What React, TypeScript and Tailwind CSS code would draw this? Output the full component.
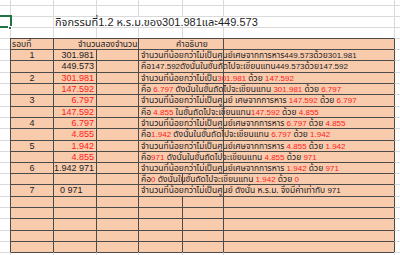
type Seg = { t: string; red?: boolean };

const s = (t: string, red = false): Seg => ({ t, red });

type DataRow = {
  h: 11 | 12;
  b?: string;
  c?: string;
  cRed?: boolean;
  cLeft?: boolean;
  e: Seg[];
  split?: boolean;
};

const dataRows: DataRow[] = [
  { h: 11, b: "1", c: "301.981", e: [s("จำนวนที่น้อยกว่าไม่เป็นศูนย์เศษจากการหาร449.573ด้วย301.981")] },
  { h: 12, c: "449.573", e: [s("คือ147.592ดังนั้นในขั้นถัดไปจะเขียนแทน449.573ด้วย147.592")] },
  {
    h: 11,
    b: "2",
    c: "301.981",
    cRed: true,
    e: [s("จำนวนที่น้อยกว่าไม่เป็น"), s("301.981", true), s(" ด้วย "), s("147.592", true)],
  },
  {
    h: 11,
    c: "147.592",
    cRed: true,
    e: [s("คือ "), s("6.797", true), s(" ดังนั้นในขั้นถัดไปจะเขียนแทน "), s("301.981", true), s(" ด้วย "), s("6.797", true)],
  },
  {
    h: 12,
    b: "3",
    c: "6.797",
    cRed: true,
    e: [s("จำนวนที่น้อยกว่าไม่เป็นศูนย์ เศษจากการหาร "), s("147.592", true), s(" ด้วย "), s("6.797", true)],
  },
  {
    h: 11,
    c: "147.592",
    cRed: true,
    e: [s("คือ "), s("4.855", true), s(" ในขั้นถัดไปจะเขียนแทน"), s("147.592", true), s(" ด้วย "), s("4.855", true)],
  },
  {
    h: 11,
    b: "4",
    c: "6.797",
    cRed: true,
    e: [s("จำนวนที่น้อยกว่าไม่เป็นศูนย์เศษจากการหาร "), s("6.797", true), s(" ด้วย "), s("4.855", true)],
  },
  {
    h: 12,
    c: "4.855",
    cRed: true,
    e: [s("คือ"), s("1.942", true), s(" ดังนั้นในขั้นถัดไปจะเขียนแทน "), s("6.797", true), s(" ด้วย "), s("1.942", true)],
  },
  {
    h: 11,
    b: "5",
    c: "1.942",
    cRed: true,
    e: [s("จำนวนที่น้อยกว่าไม่เป็นศูนย์เศษจากการหาร "), s("4.855", true), s(" ด้วย "), s("1.942", true)],
  },
  {
    h: 11,
    c: "4.855",
    cRed: true,
    e: [s("คือ"), s("971", true), s(" ดังนั้นในขั้นถัดไปจะเขียนแทน "), s("4.855", true), s(" ด้วย "), s("971", true)],
  },
  {
    h: 11,
    b: "6",
    c: "1.942 971",
    e: [s("จำนวนที่น้อยกว่าไม่เป็นศูนย์เศษจากการหาร "), s("1.942", true), s(" ด้วย "), s("971", true)],
  },
  {
    h: 11,
    split: true,
    e: [s("คือ"), s("0", true), s(" ดังนั้นในขั้นถัดไปจะเขียนแทน "), s("1.942", true), s(" ด้วย "), s("0", true)],
  },
  {
    h: 12,
    b: "7",
    c: "0 971",
    cLeft: true,
    e: [s("จำนวนที่น้อยกว่าไม่เป็นศูนย์ ดังนั้น ห.ร.ม. จึงมีค่าเท่ากับ 971")],
  },
];

const emptyHeights: (11 | 12)[] = [11, 11, 12, 11, 11];

const thaiSm = "font-['Noto_Sans_Thai',sans-serif] text-[8.5px]";
const digitSm = "font-['Liberation_Sans',sans-serif] text-[8px]";
const thaiLg = "font-['Noto_Sans_Thai',sans-serif] text-[11px]";
const digitLg = "font-['Liberation_Sans',sans-serif] text-[11px]";

// Thai runs in a Thai face, numbers in Liberation Sans
function Mixed({ text, big = false }: { text: string; big?: boolean }) {
  const parts = text.split(/(\d[\d.]*)/);
  return (
    <>
      {parts.map((p, i) =>
        p === "" ? null : (
          <span key={i} className={/^\d/.test(p) ? (big ? digitLg : digitSm) : big ? thaiLg : thaiSm}>
            {p}
          </span>
        ),
      )}
    </>
  );
}

function Segs({ segs }: { segs: Seg[] }) {
  return (
    <>
      {segs.map((g, i) => (
        <span key={i} className={g.red ? "text-[#ff1a1a]" : "text-[#1e1e1e]"}>
          <Mixed text={g.t} />
        </span>
      ))}
    </>
  );
}

// light gridline columns outside the table
function LightCols({ top = true }: { top?: boolean }) {
  const t = top ? "border-t" : "";
  return (
    <>
      <div className={`w-[43px] border-l ${t} border-[#dadada]`} />
      <div className={`w-[43px] border-l ${t} border-[#dadada]`} />
      <div className={`w-[42px] border-l ${t} border-[#dadada]`} />
      <div className={`w-[44px] border-l ${t} border-[#dadada]`} />
      <div className={`w-[41px] border-l ${t} border-[#dadada]`} />
      <div className={`w-[171px] border-l ${t} border-[#dadada]`} />
    </>
  );
}

function TableRow({ h, children }: { h: 11 | 12; children: React.ReactNode }) {
  return (
    <div className={`flex ${h === 12 ? "h-[12px]" : "h-[11px]"}`}>
      <div className="w-[10px] border-t border-[#dadada]" />
      <div className="flex w-[384px] bg-[#f8cbad]">{children}</div>
      <div className="w-[6px] border-l border-t border-l-[#4b4b4b] border-t-[#dadada]" />
    </div>
  );
}

const cell = "border-l border-t border-[#4b4b4b] whitespace-nowrap leading-[10px]";

export default function App() {
  return (
    <div className="w-[400px] h-[255px] overflow-hidden bg-white text-[9px] font-['Liberation_Sans',sans-serif]">
      {/* rows above the table */}
      <div className="flex h-[5px]">
        <div className="w-[10px]" />
        <LightCols top={false} />
        <div className="w-[6px] border-l border-[#dadada]" />
      </div>
      <div className="flex h-[11px]">
        <div className="w-[10px] border-t border-[#dadada]" />
        <LightCols />
        <div className="w-[6px] border-l border-t border-[#dadada]" />
      </div>
      <div className="flex h-[11px]">
        <div className="relative w-[10px] border-t border-[#dadada]">
          <div className="absolute left-0 top-[-2px] h-[13px] w-[12px] border-2 border-l-0 border-[#217346]" />
          <div className="absolute left-[8px] top-[9px] h-[4px] w-[4px] border border-white bg-[#217346]" />
        </div>
        <div className="w-[43px] border-l border-t border-[#dadada]" />
        <div className="w-[341px] border-l border-t border-[#dadada] pl-[1px] whitespace-nowrap leading-[10px] text-[#1e1e1e]">
          <Mixed big text="กิจกรรมที่1.2 ห.ร.ม.ของ301.981และ449.573" />
        </div>
        <div className="w-[6px] border-l border-t border-[#dadada]" />
      </div>
      <div className="flex h-[11px]">
        <div className="w-[10px] border-t border-[#dadada]" />
        <LightCols />
        <div className="w-[6px] border-l border-t border-[#dadada]" />
      </div>

      {/* header */}
      <TableRow h={11}>
        <div className={`${cell} w-[43px] pl-[1px] text-[#1e1e1e]`}>
          <Mixed text="รอบที่" />
        </div>
        <div className={`${cell} w-[85px] overflow-hidden pl-[24px] text-[#1e1e1e]`}>
          <Mixed text="จำนวนสองจำนวน" />
        </div>
        <div className={`${cell} w-[85px] pl-[37px] text-[#1e1e1e]`}>
          <Mixed text="คำอธิบาย" />
        </div>
        <div className={`${cell} w-[171px]`} />
      </TableRow>

      {dataRows.map((r, i) => (
        <TableRow key={i} h={r.h}>
          <div className={`${cell} w-[43px] text-center text-[#1e1e1e]`}>{r.b}</div>
          <div
            className={`${cell} w-[43px] ${r.cLeft ? "pl-[6px] text-left" : "pr-[2px] text-right"} ${
              r.cRed ? "text-[#ff1a1a]" : "text-[#1e1e1e]"
            }`}
          >
            {r.c}
          </div>
          <div className={`${cell} w-[42px]`} />
          {r.split ? (
            <>
              <div className={`${cell} w-[44px] pl-[2px]`}>
                <Segs segs={r.e} />
              </div>
              <div className={`${cell} w-[212px]`} />
            </>
          ) : (
            <>
              <div className={`${cell} w-[85px] pl-[2px]`}>
                <Segs segs={r.e} />
              </div>
              <div className={`${cell} w-[171px]`} />
            </>
          )}
        </TableRow>
      ))}

      {emptyHeights.map((h, i) => (
        <TableRow key={`e${i}`} h={h}>
          <div className={`${cell} w-[43px]`} />
          <div className={`${cell} w-[43px]`} />
          <div className={`${cell} w-[42px]`} />
          <div className={`${cell} w-[44px]`} />
          <div className={`${cell} w-[41px]`} />
          <div className={`${cell} w-[171px]`} />
        </TableRow>
      ))}

      {/* below the table */}
      <div className="flex h-[3px]">
        <div className="w-[10px] border-t border-[#dadada]" />
        <div className="w-[43px] border-l border-t border-l-[#dadada] border-t-[#4b4b4b]" />
        <div className="w-[43px] border-l border-t border-l-[#dadada] border-t-[#4b4b4b]" />
        <div className="w-[42px] border-l border-t border-l-[#dadada] border-t-[#4b4b4b]" />
        <div className="w-[44px] border-l border-t border-l-[#dadada] border-t-[#4b4b4b]" />
        <div className="w-[41px] border-l border-t border-l-[#dadada] border-t-[#4b4b4b]" />
        <div className="w-[171px] border-l border-t border-l-[#dadada] border-t-[#4b4b4b]" />
        <div className="w-[6px] border-l border-t border-[#dadada]" />
      </div>
    </div>
  );
}
